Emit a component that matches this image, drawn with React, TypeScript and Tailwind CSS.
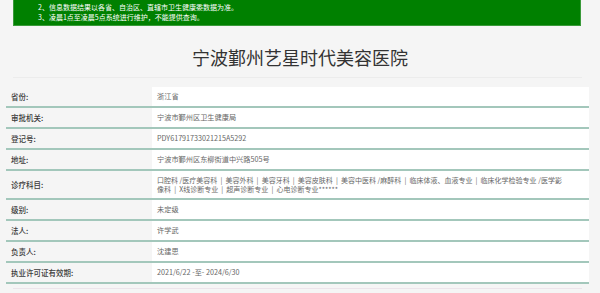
import React from "react";

const rows: { label: string; value: React.ReactNode; tall?: boolean }[] = [
  { label: "省份:", value: "浙江省" },
  { label: "审批机关:", value: "宁波市鄞州区卫生健康局" },
  { label: "登记号:", value: "PDY61791733021215A5292" },
  { label: "地址:", value: "宁波市鄞州区东柳街道中兴路505号" },
  {
    label: "诊疗科目:",
    value: (
      <div className="text-[7px]">
        <div>
          口腔科 /医疗美容科 &nbsp;|&nbsp; 美容外科 &nbsp;|&nbsp; 美容牙科 &nbsp;|&nbsp; 美容皮肤科 &nbsp;|&nbsp; 美容中医科 /麻醉科 &nbsp;|&nbsp; 临床体液、血液专业 &nbsp;|&nbsp; 临床化学检验专业 /医学影
        </div>
        <div>像科 &nbsp;|&nbsp; X线诊断专业 &nbsp;|&nbsp; 超声诊断专业 &nbsp;|&nbsp; 心电诊断专业******</div>
      </div>
    ),
    tall: true,
  },
  { label: "级别:", value: "未定级" },
  { label: "法人:", value: "许学武" },
  { label: "负责人:", value: "沈建思" },
  { label: "执业许可证有效期:", value: "2021/6/22 -至- 2024/6/30" },
];

export default function App() {
  return (
    <div
      className="w-[600px] h-[293px] overflow-hidden bg-[#f5f5f5]"
      style={{ fontFamily: '"Noto Sans CJK SC", "Noto Sans", sans-serif' }}
    >
      <div className="ml-[13px] w-[568px] h-[26px] bg-[#008000] border-r border-b border-l border-[#3a9a3a] pl-[24px] pt-[2px] text-white text-[7px] leading-[10px]">
        <div>2、信息数据结果以各省、自治区、直辖市卫生健康委数据为准。</div>
        <div>3、凌晨1点至凌晨5点系统进行维护，不能提供查询。</div>
      </div>
      <div className="mt-[19px] text-center text-[18px] leading-[24px] text-[#333333]">
        宁波鄞州艺星时代美容医院
      </div>
      <div className="ml-[13px] mr-[18px] mt-[8px] border-t border-[#ececec]">
        <div className="-ml-[7px] -mr-[7px] mt-[9px]">
          {rows.map((r) => (
            <div
              key={r.label}
              className={
                r.tall
                  ? "flex h-[29px] border-b-2 border-[#a3c7bb]"
                  : "flex h-[21px] border-b-2 border-[#a3c7bb]"
              }
            >
              <div className="w-[146px] shrink-0 pl-[5px] flex items-center text-[7.5px] leading-[9px] text-[#3a3a3a] font-medium">
                {r.label}
              </div>
              <div className="flex-1 bg-white pl-[5px] flex flex-col justify-center text-[7.2px] leading-[9px] text-[#666666] whitespace-nowrap overflow-hidden">
                {r.value}
              </div>
            </div>
          ))}
        </div>
        <div className="mt-[4px] border-t border-[#ece4ea]" />
      </div>
    </div>
  );
}
